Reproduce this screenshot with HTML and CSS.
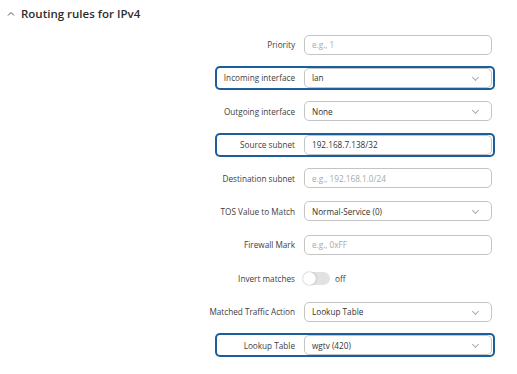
FILE: index.html
```html
<!DOCTYPE html>
<html lang="en">
<head>
  <meta charset="UTF-8">
  <title>Routing rules for IPv4</title>
  <link rel="stylesheet" href="styles.css">
</head>
<body>
  <section class="panel">
    <header class="panel-header">
      <svg class="collapse-icon" width="8" height="5" viewBox="0 0 8 5"><path d="M1 4.5 L4 1.5 L7 4.5" fill="none" stroke="#555" stroke-width="1"/></svg>
      <h2>Routing rules for IPv4</h2>
    </header>

    <div class="form">
      <div class="row">
        <label>Priority</label>
        <div class="field placeholder">e.g., 1</div>
      </div>
      <div class="row highlight">
        <label>Incoming interface</label>
        <div class="field select">lan</div>
      </div>
      <div class="row">
        <label>Outgoing interface</label>
        <div class="field select">None</div>
      </div>
      <div class="row highlight">
        <label>Source subnet</label>
        <div class="field">192.168.7.138/32</div>
      </div>
      <div class="row">
        <label>Destination subnet</label>
        <div class="field placeholder">e.g., 192.168.1.0/24</div>
      </div>
      <div class="row">
        <label>TOS Value to Match</label>
        <div class="field select">Normal-Service (0)</div>
      </div>
      <div class="row">
        <label>Firewall Mark</label>
        <div class="field placeholder">e.g., 0xFF</div>
      </div>
      <div class="row">
        <label>Invert matches</label>
        <div class="switch-wrap">
          <span class="switch"><span class="knob"></span></span>
          <span class="switch-text">off</span>
        </div>
      </div>
      <div class="row">
        <label>Matched Traffic Action</label>
        <div class="field select">Lookup Table</div>
      </div>
      <div class="row highlight">
        <label>Lookup Table</label>
        <div class="field select">wgtv (420)</div>
      </div>
    </div>
  </section>
</body>
</html>
```

FILE: styles.css
```css
:root {
  --text: #333;
  --label: #404040;
  --border: #c4c4c4;
  --placeholder: #a8a8a8;
  --mark: #1c5d9c;
}

* {
  margin: 0;
  padding: 0;
  box-sizing: border-box;
  font-family: 'Open Sans', sans-serif;
}

body {
  background: #fff;
  color: var(--text);
}

.panel {
  width: 517px;
  height: 374px;
  overflow: hidden;
}

.panel-header {
  display: flex;
  align-items: center;
  gap: 6px;
  height: 26px;
  padding: 1px 0 0 7px;
}

.collapse-icon {
  flex: none;
}

.panel-header h2 {
  font-size: 11.5px;
  font-weight: 600;
  color: #2d2d2d;
}

.form {
  width: 280px;
  margin: 6.5px 22px 0 auto;
  display: flex;
  flex-direction: column;
  gap: 9.4px;
}

.row {
  height: 24px;
  display: grid;
  grid-template-columns: minmax(0, 1fr) 188px;
  column-gap: 9px;
  align-items: center;
  padding-right: 3px;
  border-radius: 5px;
}

.row.highlight {
  box-shadow: inset 0 0 0 2px var(--mark);
}

.row label {
  min-width: 0;
  display: flex;
  justify-content: flex-end;
  white-space: nowrap;
  font-size: 8.2px;
  color: var(--label);
}

.field {
  height: 20px;
  border: 1px solid var(--border);
  border-radius: 5px;
  padding: 0 7px;
  display: flex;
  align-items: center;
  font-size: 8.2px;
  color: #333;
  background: #fff;
}

.field.placeholder {
  color: var(--placeholder);
}

.field.select {
  position: relative;
}

.field.select::after {
  content: "";
  position: absolute;
  right: 13px;
  top: 6px;
  width: 4px;
  height: 4px;
  border-right: 1px solid #aaa;
  border-bottom: 1px solid #aaa;
  transform: rotate(45deg);
}

.switch-wrap {
  display: flex;
  align-items: center;
  gap: 5px;
  margin-left: -1px;
}

.switch {
  width: 27px;
  height: 13px;
  border-radius: 7px;
  background: #e2e2e2;
  display: flex;
  align-items: center;
}

.knob {
  width: 13px;
  height: 13px;
  border-radius: 50%;
  background: #fff;
  box-shadow: 0 0 2px rgba(0, 0, 0, 0.35);
}

.switch-text {
  font-size: 8.2px;
  color: var(--label);
}
```
